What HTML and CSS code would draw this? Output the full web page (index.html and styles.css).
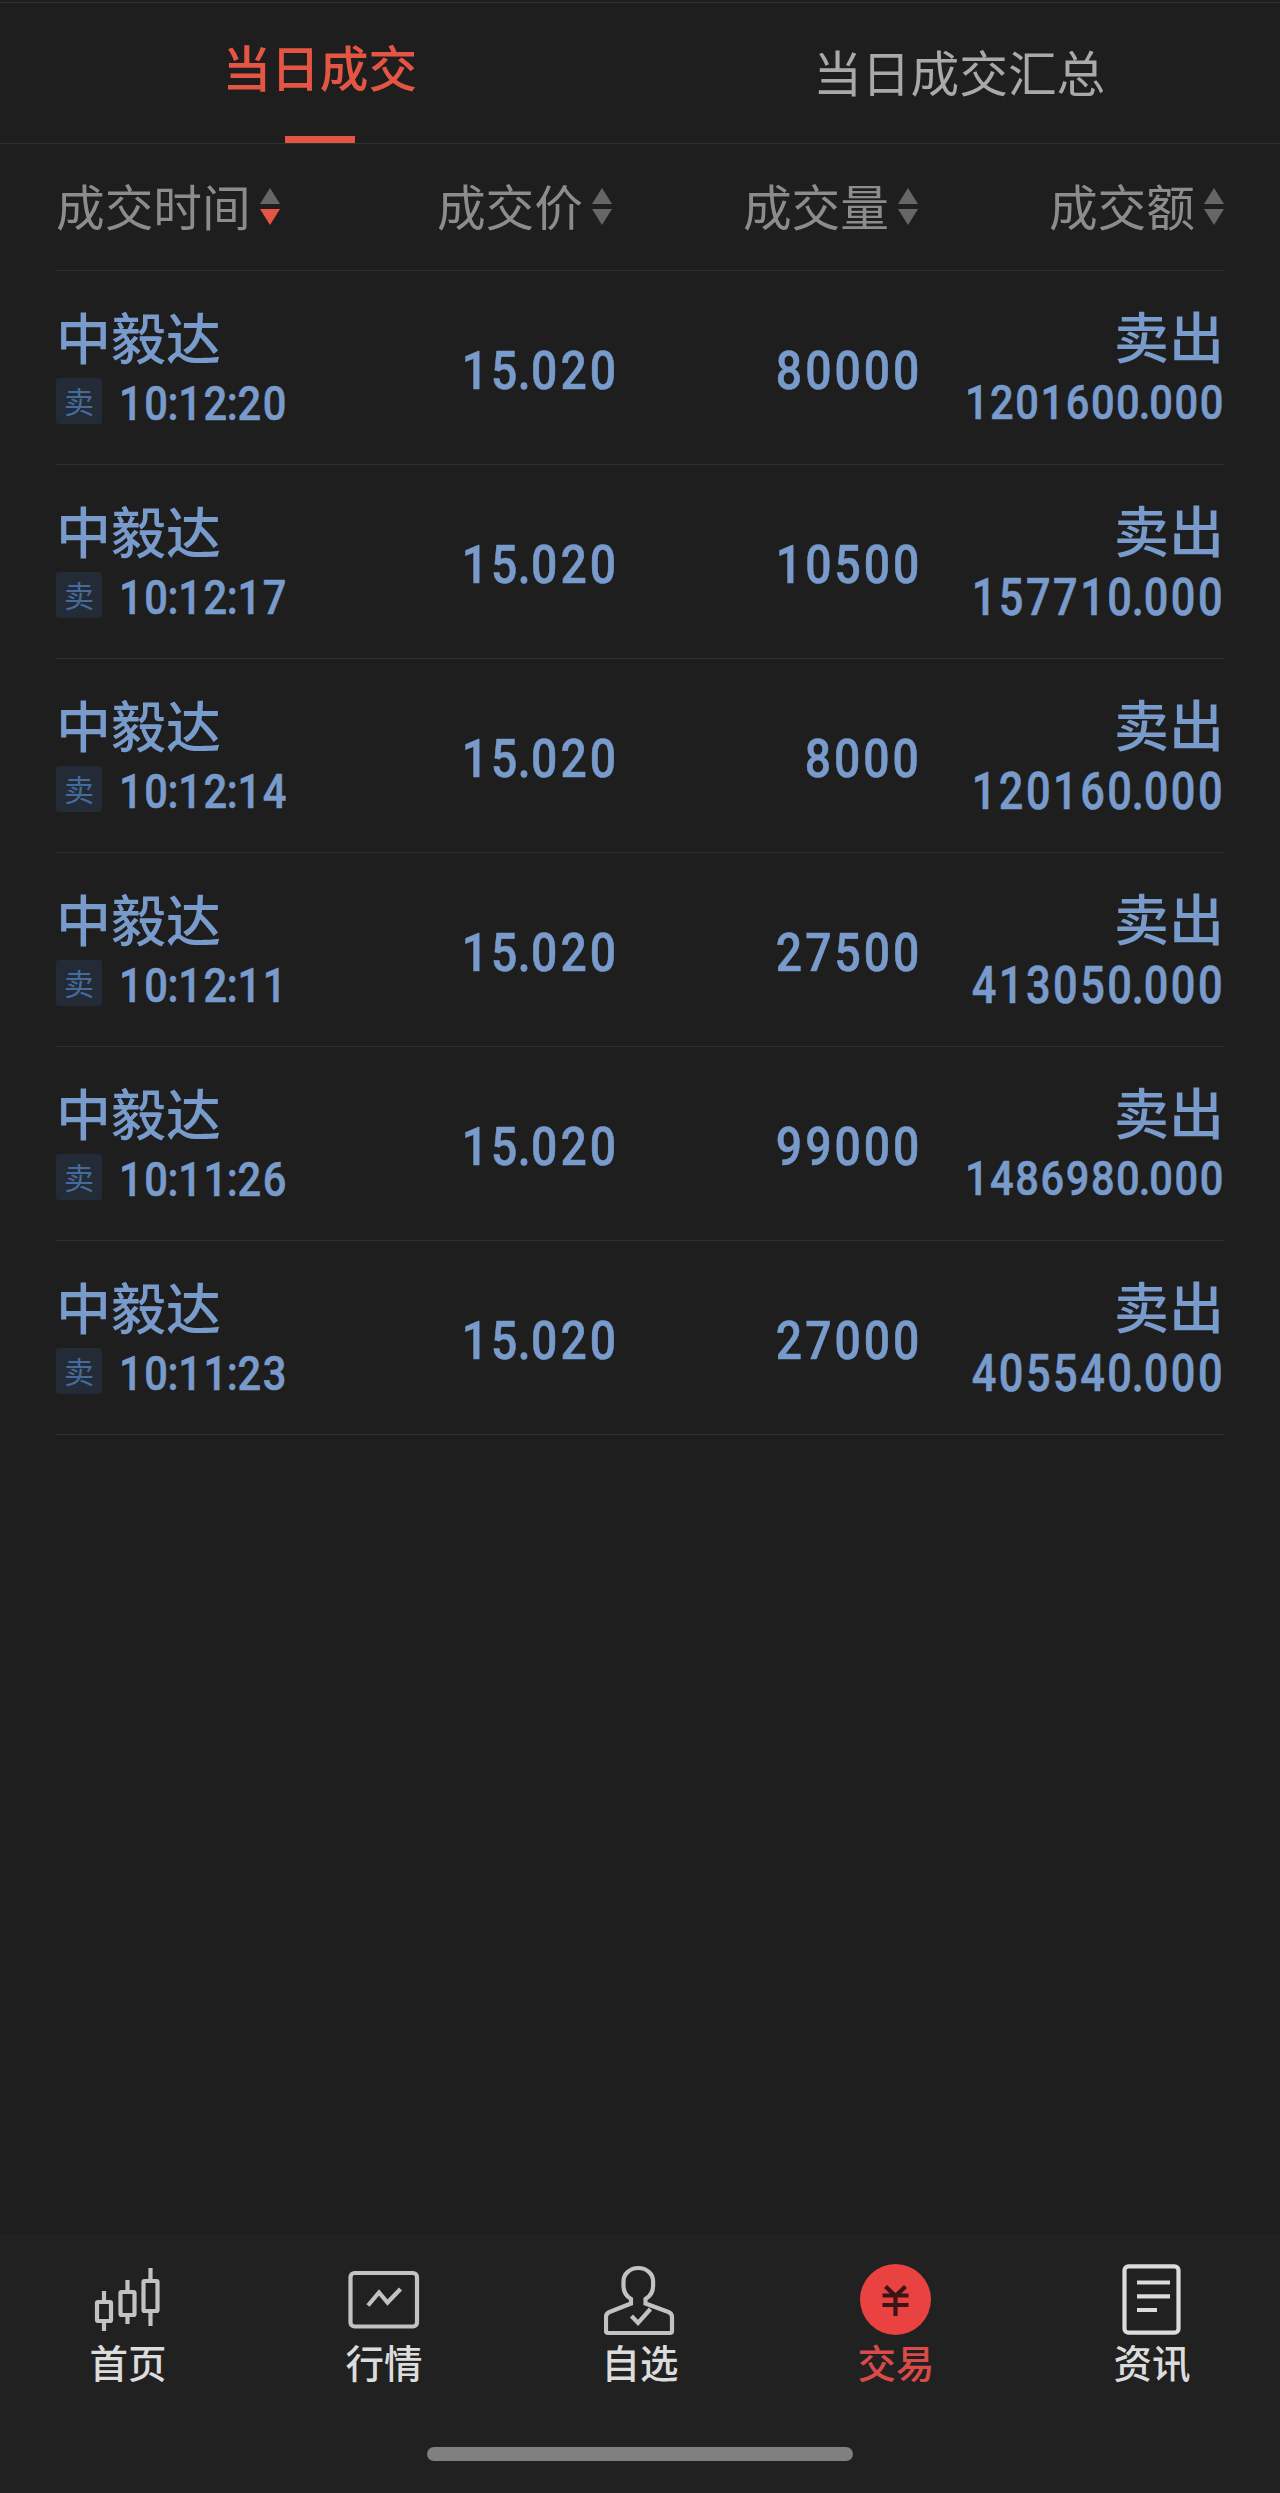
FILE: index.html
```
<!DOCTYPE html>
<html lang="zh-CN">
<head>
  <meta charset="UTF-8">
  <title>当日成交</title>
  <link rel="stylesheet" href="styles.css">
</head>
<body>
  <div class="tabs">
    <div class="tab active"><span>当日成交</span></div>
    <div class="tab"><span>当日成交汇总</span></div>
  </div>

  <div class="table">
    <div class="thead">
      <div class="th time">成交时间<svg class="sort desc" viewBox="0 0 20 38"><path d="M10 0 20 16H0z"/><path class="down" d="M0 21h20L10 37z"/></svg></div>
      <div class="th price">成交价<svg class="sort" viewBox="0 0 20 38"><path d="M10 0 20 16H0z"/><path class="down" d="M0 21h20L10 37z"/></svg></div>
      <div class="th volume">成交量<svg class="sort" viewBox="0 0 20 38"><path d="M10 0 20 16H0z"/><path class="down" d="M0 21h20L10 37z"/></svg></div>
      <div class="th amount">成交额<svg class="sort" viewBox="0 0 20 38"><path d="M10 0 20 16H0z"/><path class="down" d="M0 21h20L10 37z"/></svg></div>
    </div>

    <div class="row">
      <div class="stock"><div class="name">中毅达</div><div class="sub"><span class="tag">卖</span><span class="clock num">10<i>:</i>12<i>:</i>20</span></div></div>
      <div class="price"><span class="num">15<i>.</i>020</span></div>
      <div class="volume"><span class="num">80000</span></div>
      <div class="amount"><div class="side">卖出</div><span class="num money long">1201600<i>.</i>000</span></div>
    </div>
    <div class="row">
      <div class="stock"><div class="name">中毅达</div><div class="sub"><span class="tag">卖</span><span class="clock num">10<i>:</i>12<i>:</i>17</span></div></div>
      <div class="price"><span class="num">15<i>.</i>020</span></div>
      <div class="volume"><span class="num">10500</span></div>
      <div class="amount"><div class="side">卖出</div><span class="num money">157710<i>.</i>000</span></div>
    </div>
    <div class="row">
      <div class="stock"><div class="name">中毅达</div><div class="sub"><span class="tag">卖</span><span class="clock num">10<i>:</i>12<i>:</i>14</span></div></div>
      <div class="price"><span class="num">15<i>.</i>020</span></div>
      <div class="volume"><span class="num">8000</span></div>
      <div class="amount"><div class="side">卖出</div><span class="num money">120160<i>.</i>000</span></div>
    </div>
    <div class="row">
      <div class="stock"><div class="name">中毅达</div><div class="sub"><span class="tag">卖</span><span class="clock num">10<i>:</i>12<i>:</i>11</span></div></div>
      <div class="price"><span class="num">15<i>.</i>020</span></div>
      <div class="volume"><span class="num">27500</span></div>
      <div class="amount"><div class="side">卖出</div><span class="num money">413050<i>.</i>000</span></div>
    </div>
    <div class="row">
      <div class="stock"><div class="name">中毅达</div><div class="sub"><span class="tag">卖</span><span class="clock num">10<i>:</i>11<i>:</i>26</span></div></div>
      <div class="price"><span class="num">15<i>.</i>020</span></div>
      <div class="volume"><span class="num">99000</span></div>
      <div class="amount"><div class="side">卖出</div><span class="num money long">1486980<i>.</i>000</span></div>
    </div>
    <div class="row">
      <div class="stock"><div class="name">中毅达</div><div class="sub"><span class="tag">卖</span><span class="clock num">10<i>:</i>11<i>:</i>23</span></div></div>
      <div class="price"><span class="num">15<i>.</i>020</span></div>
      <div class="volume"><span class="num">27000</span></div>
      <div class="amount"><div class="side">卖出</div><span class="num money">405540<i>.</i>000</span></div>
    </div>
  </div>

  <div class="bottom">
    <div class="nav">
      <div class="item">
        <svg class="icon" viewBox="0 0 72 72"><rect x="5" y="38" width="14" height="19" rx="1"/><path d="M12 27v11M12 57v10"/><rect x="28.500" y="28" width="14" height="23" rx="1"/><path d="M35.500 16v12M35.500 51v9"/><rect x="51.500" y="17" width="14" height="30" rx="1"/><path d="M58.500 4v13M58.500 47v15"/></svg>
        <span>首页</span>
      </div>
      <div class="item">
        <svg class="icon" viewBox="0 0 72 72"><rect x="2.500" y="9" width="66.500" height="53.500" rx="4"/><path d="M20 41.500 31 28.500l8.500 10L52.500 25"/></svg>
        <span>行情</span>
      </div>
      <div class="item">
        <svg class="icon" viewBox="0 0 72 72"><path d="M27 39.500V35C22 32 19.500 27 19.500 22v-5a14.800 13 0 0 1 29.600 0v5c0 5-2.600 10-7.600 13v4.500L64.500 48q3.500 1.500 3.500 5v14q0 2-2 2H4q-2 0-2-2V53q0-3.500 3.500-5z"/><path d="M27.500 52 34 59l12.500-14"/></svg>
        <span>自选</span>
      </div>
      <div class="item active">
        <svg class="icon" viewBox="0 0 72 72"><circle cx="35.500" cy="35.500" r="35.500"/><path d="M25.500 22.500 35.500 32l10-9.500M22.500 31.500h26M22.500 41h26M35.500 31v21"/></svg>
        <span>交易</span>
      </div>
      <div class="item news">
        <svg class="icon" viewBox="0 0 72 72"><rect x="8.500" y="2.300" width="54" height="66.400" rx="4"/><path d="M21 18.500h33M21 32.300h33M21 46h20"/></svg>
        <span>资讯</span>
      </div>
    </div>
    <div class="home-bar"></div>
  </div>
</body>
</html>
```
FILE: styles.css
```
* {
  box-sizing: border-box;
}

body {
  margin: 0;
  height: 2493px;
  display: flex;
  flex-direction: column;
  background: #1e1e1e;
  color: #789bcb;
  font-family: "Noto Sans CJK SC", sans-serif;
}

svg {
  display: block;
}

.tabs {
  display: flex;
  height: 142px;
  margin-top: 2px;
  border-top: 1px solid #303030;
  border-bottom: 1px solid #303030;
}

.tab {
  flex: 1;
  display: flex;
  flex-direction: column;
  align-items: center;
  padding-top: 32px;
  padding-right: 1px;
  font-size: 48.7px;
  line-height: 72px;
  color: #a9a9a9;
}

.tab.active {
  padding-top: 27px;
  padding-right: 0;
  color: #e45643;
  font-weight: 500;
}

.tab.active::after {
  content: "";
  width: 70px;
  height: 7px;
  margin-top: 34px;
  background: #e45643;
}

.table {
  flex: 1;
  padding: 0 56px;
}

.thead, .row {
  display: grid;
  grid-template-columns: 250px 306px 306px 306px;
  border-bottom: 1px solid #303030;
}

.thead {
  height: 127px;
  padding-bottom: 5px;
  color: #8c8c8c;
  font-size: 48.7px;
  line-height: 72px;
}

.th {
  display: flex;
  align-items: center;
  gap: 9px;
}

.th.price, .th.volume, .th.amount {
  justify-content: flex-end;
}

.sort {
  width: 20px;
  height: 38px;
  margin-top: 5px;
  fill: #666;
}

.sort.desc .down {
  fill: #e45643;
}

.row {
  height: 194px;
  font-weight: 500;
}

.name, .side {
  font-size: 55px;
  line-height: 64px;
}

.name {
  padding-top: 32px;
  height: 107px;
}

.sub {
  display: flex;
  gap: 17px;
}

.tag {
  flex-shrink: 0;
  width: 46px;
  height: 46px;
  border-radius: 3px;
  background: #232b36;
  color: #466a9b;
  font-size: 30px;
  font-weight: 400;
  line-height: 44px;
  text-align: center;
}

/* narrow DIN-like figures */
.num {
  display: block;
  font-family: Roboto, sans-serif;
  font-size: 54.5px;
  line-height: 60px;
  letter-spacing: 3.5px;
  transform: scaleX(0.85);
  white-space: nowrap;
  -webkit-text-stroke: 0.6px currentColor;
}

.num i {
  font-style: normal;
  margin: 0 -3px;
}

.clock {
  font-size: 49px;
  line-height: 51px;
  letter-spacing: 1.8px;
  transform-origin: left;
}

.clock i {
  margin: 0 -2.2px;
}

.row .price, .row .volume {
  display: flex;
  justify-content: flex-end;
  padding-top: 69px;
}

.row .price .num, .row .volume .num {
  margin-right: -7px;
  transform-origin: right;
}

.row .volume .num {
  margin-right: -4px;
}

.row .amount {
  display: flex;
  flex-direction: column;
  align-items: flex-end;
}

.side {
  padding-top: 31px;
  height: 107px;
}

.money {
  margin-right: -1px;
  font-size: 51px;
  line-height: 51px;
  letter-spacing: 2.9px;
  transform-origin: right;
}

.money.long {
  font-size: 49px;
  line-height: 50px;
  letter-spacing: 1.8px;
}

.bottom {
  height: 259px;
  padding-top: 30px;
  background: #212121;
}

.nav {
  display: flex;
  height: 183px;
}

.item {
  flex: 1;
  display: flex;
  flex-direction: column;
  align-items: center;
  color: #dcdcdc;
  font-size: 38.5px;
  font-weight: 500;
  line-height: 56px;
}

.icon {
  width: 72px;
  height: 72px;
  fill: none;
  stroke: #c2c2c2;
  stroke-width: 4.2;
}

.item span {
  margin-top: -3px;
}

.news .icon {
  stroke: #dcdcdc;
}

.item.active {
  color: #d94a48;
}

.item.active circle {
  fill: #ea4141;
  stroke: none;
}

.item.active path {
  stroke: #3a1517;
}

.home-bar {
  width: 426px;
  height: 14px;
  margin: 0 auto;
  border-radius: 7px;
  background: #808080;
}
```
